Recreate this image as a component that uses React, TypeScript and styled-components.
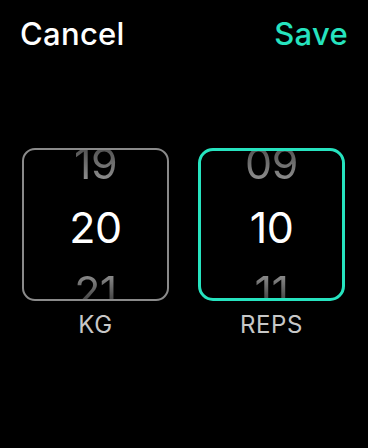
import React from "react";
import styled, { createGlobalStyle } from "styled-components";

const Global = createGlobalStyle`
  html, body { margin: 0; padding: 0; background: #000; }
  body { font-family: Inter, "Noto Sans", sans-serif; -webkit-font-smoothing: antialiased; }
`;

const Screen = styled.div`
  width: 368px;
  height: 448px;
  background: #000;
  display: flex;
  flex-direction: column;
  overflow: hidden;
`;

const Header = styled.div`
  display: flex;
  justify-content: space-between;
  align-items: center;
  padding: 14px 20px 0 20px;
  height: 40px;
`;

const HeaderButton = styled.span<{ $accent?: boolean }>`
  font-size: 31px;
  font-weight: 500;
  letter-spacing: 0.3px;
  line-height: 40px;
  color: ${(p) => (p.$accent ? "#26e3bf" : "#ffffff")};
`;

const Pickers = styled.div`
  display: flex;
  gap: 29px;
  padding: 0 0 0 22px;
  margin-top: 94px;
`;

const Column = styled.div`
  width: 147px;
  display: flex;
  flex-direction: column;
  align-items: center;
`;

const Wheel = styled.div<{ $active?: boolean }>`
  box-sizing: border-box;
  width: 100%;
  height: 153px;
  border-radius: ${(p) => (p.$active ? "15px" : "13px")};
  border: ${(p) => (p.$active ? "3px solid #26e3bf" : "2px solid #8a8a8a")};
  display: flex;
  flex-direction: column;
  align-items: center;
  justify-content: center;
  overflow: hidden;
  padding-top: 5px;
`;

const Item = styled.div<{ $fade?: "top" | "bottom" }>`
  flex: none;
  height: 64px;
  line-height: 64px;
  font-size: 43px;
  font-weight: 400;
  letter-spacing: -0.5px;
  color: #fff;
  ${(p) =>
    p.$fade === "top"
      ? `background: linear-gradient(to bottom, #555 30%, #8c8c8c 75%);
         -webkit-background-clip: text; background-clip: text; color: transparent;`
      : p.$fade === "bottom"
      ? `background: linear-gradient(to bottom, #8c8c8c 25%, #353535 72%);
         -webkit-background-clip: text; background-clip: text; color: transparent;`
      : ""}
`;

const Label = styled.div`
  margin-top: 10px;
  font-size: 24px;
  line-height: 28px;
  letter-spacing: 0.6px;
  color: #c8c8c8;
`;

type PickerProps = { prev: string; value: string; next: string; label: string; active?: boolean };

const Picker = ({ prev, value, next, label, active }: PickerProps) => (
  <Column>
    <Wheel $active={active}>
      <Item $fade="top">{prev}</Item>
      <Item>{value}</Item>
      <Item $fade="bottom">{next}</Item>
    </Wheel>
    <Label>{label}</Label>
  </Column>
);

export default function App() {
  return (
    <Screen>
      <Global />
      <Header>
        <HeaderButton>Cancel</HeaderButton>
        <HeaderButton $accent>Save</HeaderButton>
      </Header>
      <Pickers>
        <Picker prev="19" value="20" next="21" label="KG" />
        <Picker prev="09" value="10" next="11" label="REPS" active />
      </Pickers>
    </Screen>
  );
}
